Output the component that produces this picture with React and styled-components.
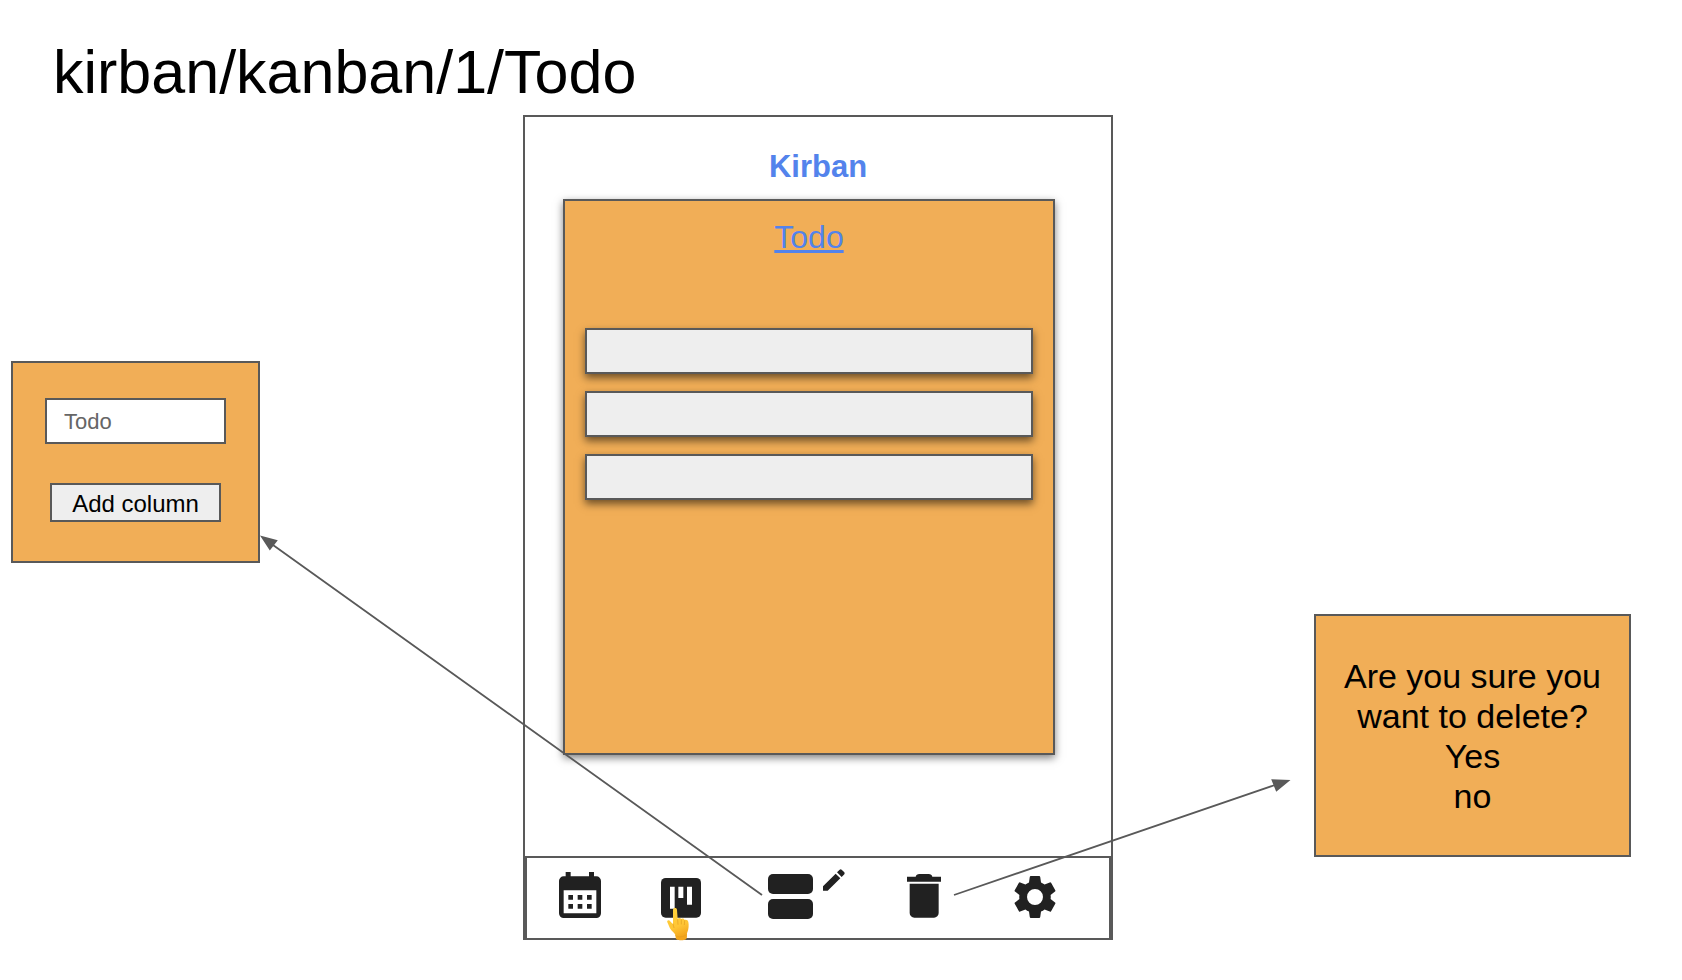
import React from "react";
import styled, { createGlobalStyle } from "styled-components";

const line = "#595959";
const orange = "#f1ae57";
const blue = "#5383ec";
const ink = "#212121";

const GlobalStyle = createGlobalStyle`
  * { box-sizing: border-box; }
  body {
    margin: 0;
    background: #fff;
    color: #000;
    font-family: "Liberation Sans", Arial, sans-serif;
  }
  button, input { font: inherit; color: inherit; margin: 0; border-radius: 0; }
`;

const Page = styled.div`
  padding: 36px 51px 40px 11px;
`;

const Path = styled.h1`
  margin: 0;
  padding-left: 42px;
  font-size: 61px;
  line-height: 72px;
  font-weight: 400;
  white-space: nowrap;
`;

const Board = styled.main`
  position: relative;
  display: grid;
  grid-template-columns:
    minmax(0, 249fr) minmax(0, 263fr) minmax(0, 590fr)
    minmax(0, 201fr) minmax(0, 317fr);
  align-items: start;
  padding-top: 7px;
`;

const Panel = styled.section`
  display: flex;
  flex-direction: column;
  align-items: center;
  border: 2px solid ${line};
  background: ${orange};
`;

const AddPanel = styled(Panel).attrs({ as: "form" })`
  grid-column: 1;
  margin-top: 246px;
  padding: 35px 32px 39px;
  gap: 39px;
`;

const NameInput = styled.input`
  width: 100%;
  height: 46px;
  padding: 2px 17px 0;
  border: 2px solid ${line};
  background: #fff;
  color: #666;
  font-size: 22px;
`;

const AddButton = styled.button`
  height: 39px;
  padding: 2px 20px 0;
  border: 2px solid ${line};
  background: #eee;
  font-size: 24px;
  line-height: 28px;
  white-space: nowrap;
`;

const ConfirmPanel = styled(Panel)`
  grid-column: 5;
  margin-top: 499px;
  padding: 40px 16px 39px;
  font-size: 34px;
  line-height: 40px;
  text-align: center;
`;

const Question = styled.p`
  margin: 0;
`;

const Answer = styled.button`
  padding: 0;
  border: 0;
  background: none;
  line-height: 40px;
`;

const Phone = styled.section`
  grid-column: 3;
  display: flex;
  flex-direction: column;
  border: 2px solid ${line};
  border-bottom: 0;
`;

const Brand = styled.h2`
  margin: 0;
  padding-top: 32px;
  font-size: 31px;
  line-height: 36px;
  text-align: center;
  color: ${blue};
`;

const Column = styled.article`
  display: flex;
  flex-direction: column;
  align-items: center;
  min-height: 556px;
  margin: 14px 56px 101px 38px;
  padding: 18px 20px;
  border: 2px solid ${line};
  background: ${orange};
  box-shadow: 0 3px 8px rgba(0, 0, 0, 0.5);
`;

const ColumnLink = styled.a`
  font-size: 32px;
  line-height: 36px;
  color: ${blue};
  text-decoration: underline;
  text-decoration-thickness: 3px;
  text-underline-offset: 2px;
`;

const Tasks = styled.ul`
  display: flex;
  flex-direction: column;
  gap: 17px;
  width: 100%;
  margin: 73px 0 0;
  padding: 0;
  list-style: none;
`;

const Task = styled.li`
  height: 46px;
  border: 2px solid ${line};
  background: #eee;
  box-shadow: 0 4px 8px rgba(0, 0, 0, 0.55);
`;

const Toolbar = styled.nav`
  display: grid;
  grid-template-columns: 106fr 96fr 155fr 80fr 142fr;
  align-items: end;
  justify-items: center;
  height: 84px;
  padding: 0 3px 20px 0;
  border: 2px solid ${line};
`;

const Tool = styled.button`
  position: relative;
  display: flex;
  padding: 0;
  border: 0;
  background: none;
  color: ${ink};
  cursor: pointer;

  svg { display: block; overflow: visible; }
`;

const Pointer = styled.svg`
  position: absolute;
  left: 6px;
  top: 30px;
`;

const Arrows = styled.svg`
  position: absolute;
  top: 7px;
  left: 0;
  width: 100%;
  height: 824px;
  pointer-events: none;
  overflow: visible;
`;

const CalendarIcon = () => (
  <svg width="42" height="46" viewBox="0 0 126 138" fill="currentColor" aria-hidden="true">
    <path d="M20 0h15v13h55V0h15v13h7a14 14 0 0 1 14 14v97a14 14 0 0 1-14 14H14a14 14 0 0 1-14-14V27a14 14 0 0 1 14-14h6z" />
    <path fill="#fff" d="M14 55h98v69H14z" />
    <path d="M28 69h14v14H28zM56 69h14v14H56zM84 69h14v14H84zM28 96h14v14H28zM56 96h14v14H56zM84 96h14v14H84z" />
  </svg>
);

const KanbanIcon = () => (
  <svg width="40" height="40" viewBox="0 0 120 120" fill="currentColor" aria-hidden="true">
    <rect width="120" height="119" rx="14" />
    <path fill="#fff" d="M27 26h14v66H27zM52 26h15v34H52zM78 26h15v54H78z" />
  </svg>
);

const PointerHand = () => (
  <Pointer width="22" height="33" viewBox="0 0 66 99" aria-hidden="true">
    <defs>
      <linearGradient id="skin" x1="0" y1="0" x2="0.3" y2="1">
        <stop offset="0" stopColor="#ffd33b" />
        <stop offset="0.65" stopColor="#ffc636" />
        <stop offset="1" stopColor="#f3a51c" />
      </linearGradient>
    </defs>
    <path
      fill="url(#skin)"
      d="M18 6c0-8 12-8 12 0l2 26c3-3 9-3 11 1 4-3 9-1 10 3 5-2 10 1 11 6 2 10 1 22-3 31-2 4-1 8-1 12 0 9-5 12-17 12s-17-2-17-9c0-8-3-11-7-15C10 67 6 54 1 43c-2-5 3-8 7-5l10 11z"
    />
    <path
      fill="none"
      stroke="#e39d1f"
      strokeWidth="2"
      strokeLinecap="round"
      d="M18 48l3 11M32 35l1 14M43 35v13M53 38l-1 12M25 83c9 5 24 5 34-3"
    />
  </Pointer>
);

const ColumnsIcon = () => (
  <svg width="77" height="50" viewBox="84 82 231 150" fill="currentColor" aria-hidden="true">
    <rect x="84" y="100" width="135" height="60" rx="15" />
    <rect x="84" y="175" width="135" height="60" rx="15" />
    <path d="M249 137l38-38 14 14-38 37h-14zM291 95l8-8q3-2 6 0l8 8q2 3 0 6l-8 8z" />
  </svg>
);

const TrashIcon = () => (
  <svg width="34" height="44" viewBox="0 0 102 132" fill="currentColor" aria-hidden="true">
    <path d="M0 8h26q2-8 11-8h28q9 0 11 8h26v15H0zM8 29h87v88a14 14 0 0 1-14 14H22a14 14 0 0 1-14-14z" />
  </svg>
);

const GearIcon = () => (
  <svg width="42" height="42" viewBox="2 2 20 20" fill="currentColor" aria-hidden="true">
    <path
      fillRule="evenodd"
      d="M19.43 12.98c.04-.32.07-.64.07-.98s-.03-.66-.07-.98l2.11-1.65c.19-.15.24-.42.12-.64l-2-3.46c-.12-.22-.39-.3-.61-.22l-2.49 1c-.52-.4-1.08-.73-1.69-.98l-.38-2.65C14.46 2.18 14.25 2 14 2h-4c-.25 0-.46.18-.49.42l-.38 2.65c-.61.25-1.17.59-1.69.98l-2.49-1c-.23-.09-.49 0-.61.22l-2 3.46c-.13.22-.07.49.12.64l2.11 1.65c-.04.32-.07.65-.07.98s.03.66.07.98l-2.11 1.65c-.19.15-.24.42-.12.64l2 3.46c.12.22.39.3.61.22l2.49-1c.52.4 1.08.73 1.69.98l.38 2.65c.03.24.24.42.49.42h4c.25 0 .46-.18.49-.42l.38-2.65c.61-.25 1.17-.59 1.69-.98l2.49 1c.23.09.49 0 .61-.22l2-3.46c.12-.22.07-.49-.12-.64zM12 15.8a3.8 3.8 0 1 1 0-7.6 3.8 3.8 0 0 1 0 7.6z"
    />
  </svg>
);

const FlowArrows = () => (
  <Arrows viewBox="0 0 1620 824" preserveAspectRatio="none" fill={line} stroke={line} aria-hidden="true">
    <path strokeWidth="1.8" d="M751 780L262 430M943 780L1264 670" />
    <path stroke="none" d="M249 420.5l17.8 4.8-8 10.2zM1279.5 665l-19.3-.8 5 12.5z" />
  </Arrows>
);

const tasks = ["first", "second", "third"];

export default function App() {
  return (
    <>
      <GlobalStyle />
      <Page>
        <Path>kirban/kanban/1/Todo</Path>
        <Board>
          <AddPanel onSubmit={(event) => event.preventDefault()}>
            <NameInput aria-label="Column name" defaultValue="Todo" />
            <AddButton type="submit">Add column</AddButton>
          </AddPanel>

          <Phone>
            <Brand>Kirban</Brand>
            <Column>
              <ColumnLink href="#todo">Todo</ColumnLink>
              <Tasks>
                {tasks.map((task) => (
                  <Task key={task} />
                ))}
              </Tasks>
            </Column>
            <Toolbar>
              <Tool aria-label="Calendar"><CalendarIcon /></Tool>
              <Tool aria-label="Kanban"><KanbanIcon /><PointerHand /></Tool>
              <Tool aria-label="Edit columns"><ColumnsIcon /></Tool>
              <Tool aria-label="Delete"><TrashIcon /></Tool>
              <Tool aria-label="Settings"><GearIcon /></Tool>
            </Toolbar>
          </Phone>

          <ConfirmPanel>
            <Question>Are you sure you want to delete?</Question>
            <Answer type="button">Yes</Answer>
            <Answer type="button">no</Answer>
          </ConfirmPanel>

          <FlowArrows />
        </Board>
      </Page>
    </>
  );
}
